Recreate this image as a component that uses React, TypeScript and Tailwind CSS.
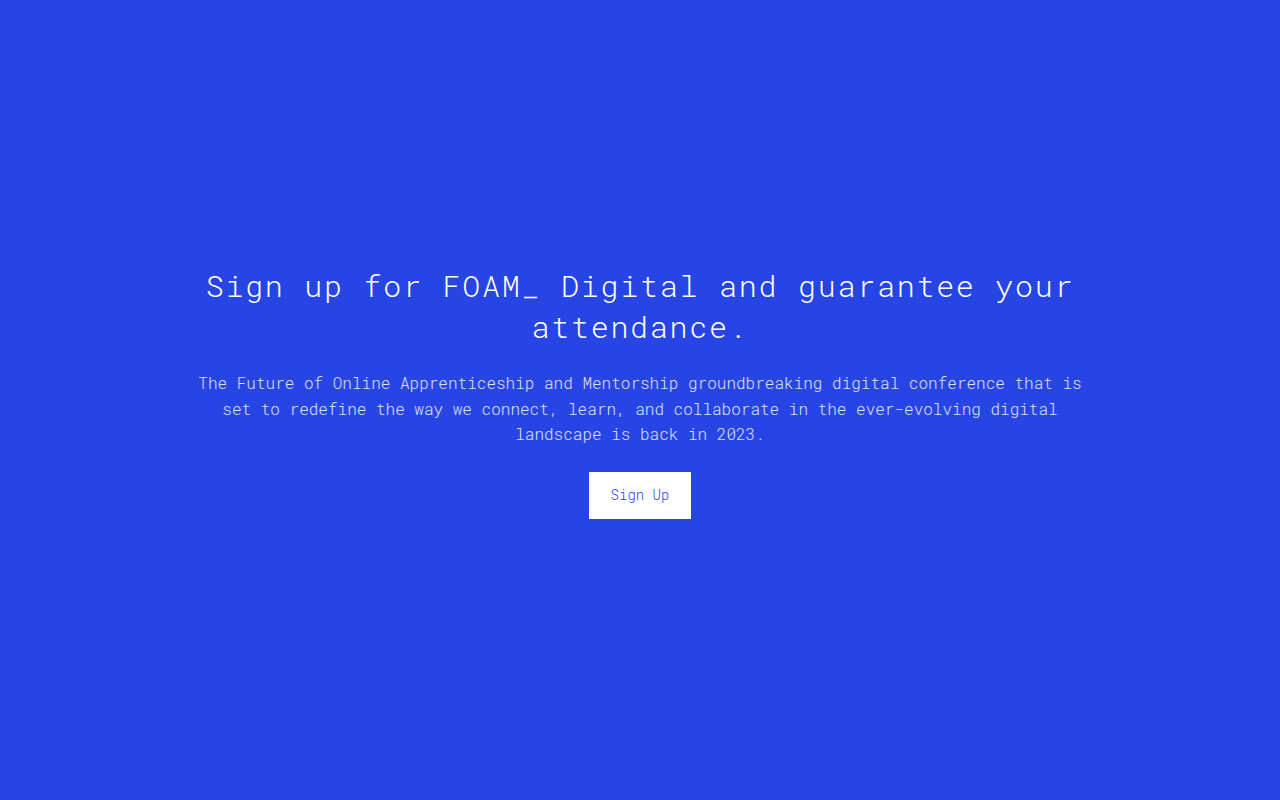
export default function App() {
  return (
    <div
      className="flex min-h-screen flex-col items-center justify-center bg-[#2744e4] px-6 pb-4 text-center font-light"
      style={{ fontFamily: '"Roboto Mono", "Liberation Mono", "DejaVu Sans Mono", monospace' }}
    >
      <div className="flex max-w-[896px] flex-col items-center">
        <h1 className="text-[30px] font-light leading-[41px] tracking-[0.058em] text-white">
          Sign up for FOAM_ Digital and guarantee your attendance.
        </h1>
        <p className="mt-[23px] text-base font-light leading-[25.6px] text-white/85">
          The Future of Online Apprenticeship and Mentorship groundbreaking digital conference that is
          set to redefine the way we connect, learn, and collaborate in the ever-evolving digital
          landscape is back in 2023.
        </p>
        <button className="mt-[25px] h-[47px] bg-white px-[22px] text-sm font-light text-[#2744e4]">
          Sign Up
        </button>
      </div>
    </div>
  );
}
